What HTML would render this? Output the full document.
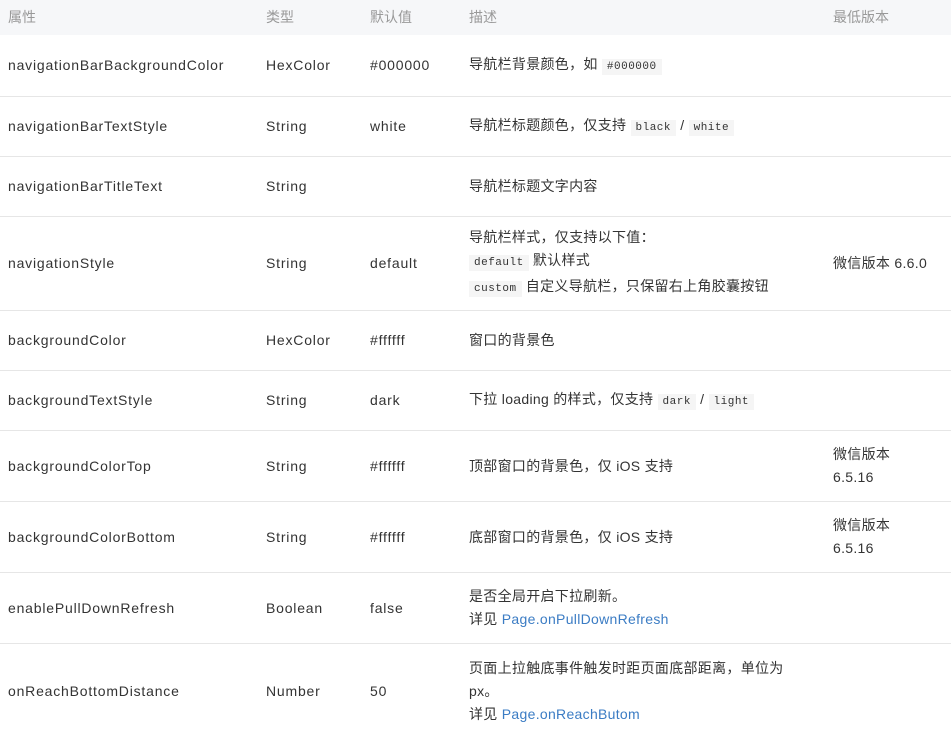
<!DOCTYPE html>
<html><head><meta charset="utf-8"><style>
*{margin:0;padding:0;box-sizing:border-box}
body{width:951px;height:732px;overflow:hidden;background:#fff;font-family:"Liberation Sans","Noto Sans CJK SC",sans-serif;color:#333;font-size:14px}
.r{position:absolute;left:0;width:951px;border-bottom:1px solid #e6e6e6}
.c{position:absolute;top:0;height:100%;display:flex;flex-direction:column;justify-content:center;line-height:23px;letter-spacing:0.8px;white-space:nowrap}
.c1{left:8px}.c2{left:266px}.c3{left:370px}.c4{left:469px;letter-spacing:0.3px}.c5{left:833px;letter-spacing:0.3px}
.h{background:#f6f7f9;color:#999;border-bottom:none}
.h .c{letter-spacing:0}
code{font-family:"Liberation Mono",monospace;font-size:11px;background:#f5f5f5;padding:2px 5px;color:#333;letter-spacing:0.5px}
a{color:#3b7cc4;text-decoration:none}
</style></head><body>
<div class="r h" style="top:0;height:35px"><div class="c c1">属性</div><div class="c c2">类型</div><div class="c c3">默认值</div><div class="c c4">描述</div><div class="c c5">最低版本</div></div>
<div class="r" style="top:35px;height:62px"><div class="c c1">navigationBarBackgroundColor</div><div class="c c2">HexColor</div><div class="c c3">#000000</div><div class="c c4"><div>导航栏背景颜色，如 <code>#000000</code></div></div></div>
<div class="r" style="top:97px;height:60px"><div class="c c1">navigationBarTextStyle</div><div class="c c2">String</div><div class="c c3">white</div><div class="c c4"><div>导航栏标题颜色，仅支持 <code>black</code> / <code>white</code></div></div></div>
<div class="r" style="top:157px;height:60px"><div class="c c1">navigationBarTitleText</div><div class="c c2">String</div><div class="c c3"></div><div class="c c4">导航栏标题文字内容</div></div>
<div class="r" style="top:217px;height:94px"><div class="c c1">navigationStyle</div><div class="c c2">String</div><div class="c c3">default</div><div class="c c4"><div>导航栏样式，仅支持以下值：</div><div><code>default</code> 默认样式</div><div><code>custom</code> 自定义导航栏，只保留右上角胶囊按钮</div></div><div class="c c5">微信版本 6.6.0</div></div>
<div class="r" style="top:311px;height:60px"><div class="c c1">backgroundColor</div><div class="c c2">HexColor</div><div class="c c3">#ffffff</div><div class="c c4">窗口的背景色</div></div>
<div class="r" style="top:371px;height:60px"><div class="c c1">backgroundTextStyle</div><div class="c c2">String</div><div class="c c3">dark</div><div class="c c4"><div>下拉 loading 的样式，仅支持 <code>dark</code> / <code>light</code></div></div></div>
<div class="r" style="top:431px;height:71px"><div class="c c1">backgroundColorTop</div><div class="c c2">String</div><div class="c c3">#ffffff</div><div class="c c4">顶部窗口的背景色，仅 iOS 支持</div><div class="c c5"><div>微信版本</div><div>6.5.16</div></div></div>
<div class="r" style="top:502px;height:71px"><div class="c c1">backgroundColorBottom</div><div class="c c2">String</div><div class="c c3">#ffffff</div><div class="c c4">底部窗口的背景色，仅 iOS 支持</div><div class="c c5"><div>微信版本</div><div>6.5.16</div></div></div>
<div class="r" style="top:573px;height:71px"><div class="c c1">enablePullDownRefresh</div><div class="c c2">Boolean</div><div class="c c3">false</div><div class="c c4"><div>是否全局开启下拉刷新。</div><div>详见 <a>Page.onPullDownRefresh</a></div></div></div>
<div class="r" style="top:644px;height:94px;border-bottom:none"><div class="c c1">onReachBottomDistance</div><div class="c c2">Number</div><div class="c c3">50</div><div class="c c4"><div>页面上拉触底事件触发时距页面底部距离，单位为</div><div>px。</div><div>详见 <a>Page.onReachButom</a></div></div></div>
</body></html>
